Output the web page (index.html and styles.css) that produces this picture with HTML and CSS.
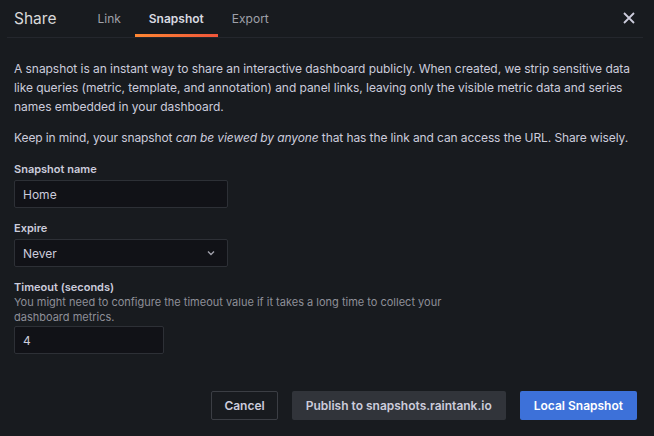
FILE: index.html
```html
<!DOCTYPE html>
<html>
<head>
<meta charset="utf-8">
<link rel="stylesheet" href="styles.css">
</head>
<body>
<div class="modal">
  <div class="header">
    <div class="title">Share</div>
    <div class="tabs">
      <div class="tab">Link</div>
      <div class="tab active">Snapshot</div>
      <div class="tab">Export</div>
    </div>
    <div class="close">
      <svg width="12" height="12" viewBox="0 0 12 12"><path d="M1 1L11 11M11 1L1 11" stroke="#ccccdc" stroke-width="1.8" fill="none"/></svg>
    </div>
  </div>
  <div class="content">
    <p class="para">A snapshot is an instant way to share an interactive dashboard publicly. When created, we strip sensitive data like queries (metric, template, and annotation) and panel links, leaving only the visible metric data and series names embedded in your dashboard.</p>
    <p class="para second">Keep in mind, your snapshot <em>can be viewed by anyone</em> that has the link and can access the URL. Share wisely.</p>

    <div class="field first">
      <div class="label">Snapshot name</div>
      <div class="input wide">Home</div>
    </div>
    <div class="field">
      <div class="label">Expire</div>
      <div class="input wide select">
        <span>Never</span>
        <svg width="8" height="6" viewBox="0 0 8 6"><path d="M1 1.5L4 4.5L7 1.5" stroke="#a0a0ab" stroke-width="1.4" fill="none"/></svg>
      </div>
    </div>
    <div class="field">
      <div class="label">Timeout (seconds)</div>
      <div class="desc">You might need to configure the timeout value if it takes a long time to collect your dashboard metrics.</div>
      <div class="input narrow">4</div>
    </div>

    <div class="actions">
      <div class="btn outline">Cancel</div>
      <div class="btn secondary">Publish to snapshots.raintank.io</div>
      <div class="btn primary">Local Snapshot</div>
    </div>
  </div>
</div>
</body>
</html>
```
FILE: styles.css
```css
* { box-sizing: border-box; }
html, body {
  margin: 0;
  padding: 0;
  background: #181b1f;
  width: 654px;
  height: 436px;
  overflow: hidden;
}
body {
  font-family: Inter, "Noto Sans", sans-serif;
  color: #ccccdc;
  font-size: 12px;
}
.modal {
  display: flex;
  flex-direction: column;
  height: 436px;
}
.header {
  display: flex;
  align-items: stretch;
  height: 38px;
  margin: 0 11px 0 7px;
  border-bottom: 1px solid #24272d;
}
.title {
  font-size: 15.5px;
  color: #d8d9da;
  padding-left: 7px;
  display: flex;
  align-items: center;
  margin-right: 27px;
  padding-bottom: 1px;
}
.tabs {
  display: flex;
}
.tab {
  padding: 0 14px;
  font-size: 12px;
  color: #9fa0a9;
  display: flex;
  align-items: center;
  border-bottom: 3px solid transparent;
  padding-top: 2px;
}
.tab.active {
  color: #d8d9e0;
  font-weight: 600;
  border-image: linear-gradient(90deg, #ff8833, #f0553a) 1;
  border-bottom: 3px solid;
}
.close {
  margin-left: auto;
  display: flex;
  align-items: center;
  padding-right: 8px;
  padding-bottom: 1px;
}
.content {
  padding: 21px 17px 0 14px;
  display: flex;
  flex-direction: column;
  flex: 1;
}
.para {
  margin: 0;
  line-height: 19px;
  font-size: 12px;
  letter-spacing: -0.05px;
}
.para.second {
  margin-top: 12px;
  letter-spacing: -0.1px;
}
.field {
  display: flex;
  flex-direction: column;
  margin-top: 13px;
}
.field.first { margin-top: 15px; }
.field:last-of-type { margin-top: 15px; }
.label {
  font-size: 11px;
  font-weight: 600;
  line-height: 14px;
  margin-bottom: 4px;
  color: #ccccdc;
}
.desc {
  font-size: 11px;
  color: #8e8f98;
  line-height: 15px;
  max-width: 440px;
  margin-top: -3px;
  margin-bottom: 1px;
}
.input {
  height: 28px;
  background: #111217;
  border: 1px solid #2d3036;
  border-radius: 2px;
  padding: 0 8px;
  display: flex;
  align-items: center;
  font-size: 12px;
  color: #ccccdc;
}
.input.wide { width: 214px; }
.input.narrow { width: 150px; }
.select {
  justify-content: space-between;
  padding-right: 12px;
}
.actions {
  margin-top: auto;
  margin-bottom: 16px;
  display: flex;
  justify-content: flex-end;
  gap: 14px;
}
.btn {
  height: 29px;
  display: flex;
  align-items: center;
  padding: 0 14px;
  font-size: 12px;
  font-weight: 600;
  border-radius: 2px;
}
.btn.outline {
  border: 1px solid #3b3e44;
  color: #ccccdc;
  padding: 0 12px;
}
.btn.secondary {
  background: #31343a;
  color: #ccccdc;
}
.btn.primary {
  background: #3d71d9;
  color: #ffffff;
}
```
